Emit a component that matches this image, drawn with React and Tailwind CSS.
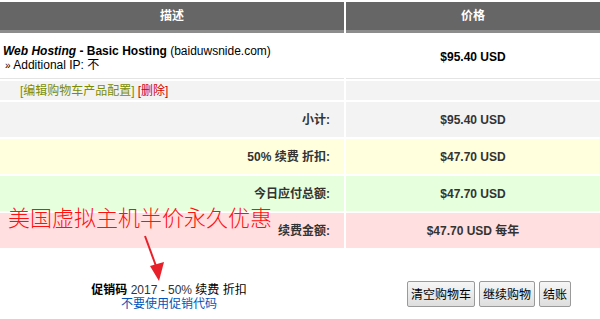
import React from 'react';

const font = { fontFamily: '"Liberation Sans", Arial, "Noto Sans CJK SC", sans-serif' };

const totals = [
  { label: '小计:', price: '$95.40 USD', bg: 'bg-[#f3f3f3]' },
  { label: '50% 续费 折扣:', price: '$47.70 USD', bg: 'bg-[#ffffdd]' },
  { label: '今日应付总额:', price: '$47.70 USD', bg: 'bg-[#e6ffdc]' },
  { label: '续费金额:', price: '$47.70 USD 每年', bg: 'bg-[#ffdfdf]' },
];

const Btn = ({ children }) => (
  <button
    type="button"
    className="h-[26px] px-[3px] border border-[#9a9a9a] rounded-[2px] bg-gradient-to-b from-[#f6f6f6] to-[#dedede] text-[12px] text-black leading-none whitespace-nowrap"
    style={{ fontFamily: '"Noto Sans CJK SC", sans-serif' }}
  >
    {children}
  </button>
);

export default function App() {
  return (
    <div className="relative w-[600px] h-[319px] bg-white text-[12px] text-black overflow-hidden" style={font}>
      {/* tabella carrello */}
      <div className="grid grid-cols-[344px_254px] gap-x-[2px] gap-y-[2px] pt-[2px]">
        <div className="h-[31px] bg-[#666666] border-b-[3px] border-[#8c8c8c] flex items-center justify-center text-white font-bold">描述</div>
        <div className="h-[31px] bg-[#666666] border-b-[3px] border-[#8c8c8c] flex items-center justify-center text-white font-bold">价格</div>

        <div className="h-[44px] bg-white border-b border-[#e4e4e4] px-[3px] pt-[9px] leading-[14px]">
          <div>
            <b><i>Web Hosting</i> - Basic Hosting</b> (baiduwsnide.com)
          </div>
          <div className="pl-[2px]">
            <span className="text-[10px]">»</span> Additional IP: 不
          </div>
        </div>
        <div className="h-[44px] bg-white border-b border-[#e4e4e4] flex items-center justify-center font-bold">$95.40 USD</div>

        <div className="h-[19px] bg-[#f3f3f3] pl-[20px] flex items-center">
          <span className="text-[#7c8c00]">[编辑购物车产品配置]</span>
          <span className="text-[#d40000] ml-[3px]">[删除]</span>
        </div>
        <div className="h-[19px] bg-[#f3f3f3]"></div>

        {totals.map((t) => (
          <React.Fragment key={t.label}>
            <div className={`h-[35px] ${t.bg} flex items-center justify-end pr-[14px] font-bold text-[#333]`}>{t.label}</div>
            <div className={`h-[35px] ${t.bg} flex items-center justify-center font-bold text-[#333]`}>{t.price}</div>
          </React.Fragment>
        ))}
      </div>

      {/* parte bassa */}
      <div className="flex items-start mt-[35px]">
        <div className="w-[338px] flex flex-col items-center leading-[14px]">
          <div>
            <b>促销码</b> <span className="text-[#333]">2017 - 50%</span> 续费 折扣
          </div>
          <a href="#" className="text-[#0055bb]">不要使用促销代码</a>
        </div>
        <div className="flex gap-[4px] ml-[69px] -mt-[2px]">
          <Btn>清空购物车</Btn>
          <Btn>继续购物</Btn>
          <Btn>结账</Btn>
        </div>
      </div>

      {/* annotazione sovrapposta */}
      <div
        className="absolute left-[8px] top-[205px] text-[22px] leading-none text-[#ff1010]"
        style={{ fontFamily: '"Noto Sans CJK SC", sans-serif', fontWeight: 300 }}
      >
        美国虚拟主机半价永久优惠
      </div>
      <svg className="absolute left-0 top-0" width="600" height="319" viewBox="0 0 600 319">
        <line x1="145" y1="236" x2="156" y2="266" stroke="#e8202a" strokeWidth="2" />
        <polygon points="150,266 164,262 159,281" fill="#e8202a" />
      </svg>
    </div>
  );
}
